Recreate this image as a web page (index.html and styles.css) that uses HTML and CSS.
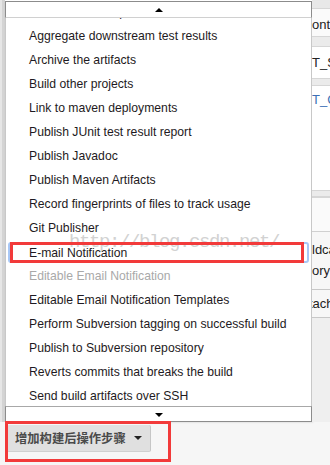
FILE: index.html
```html
<!DOCTYPE html>
<html lang="zh-CN">
<head>
  <meta charset="UTF-8">
  <title>增加构建后操作步骤</title>
  <link rel="stylesheet" href="styles.css">
</head>
<body>
  <div class="screen">
    <div class="top">
      <div class="edge"></div>
      <div class="menu">
        <div class="scroll scroll-up"><span class="tri tri-up"></span></div>
        <div class="viewport">
          <ul class="items">
            <li>Publish HTML reports</li>
            <li>Aggregate downstream test results</li>
            <li>Archive the artifacts</li>
            <li>Build other projects</li>
            <li>Link to maven deployments</li>
            <li>Publish JUnit test result report</li>
            <li>Publish Javadoc</li>
            <li>Publish Maven Artifacts</li>
            <li>Record fingerprints of files to track usage</li>
            <li>Git Publisher</li>
            <li class="focused"><span>E-mail Notification</span></li>
            <li class="disabled">Editable Email Notification</li>
            <li>Editable Email Notification Templates</li>
            <li>Perform Subversion tagging on successful build</li>
            <li>Publish to Subversion repository</li>
            <li>Reverts commits that breaks the build</li>
            <li>Send build artifacts over SSH</li>
          </ul>
        </div>
        <div class="scroll scroll-down"><span class="tri tri-down"></span></div>
      </div>
      <div class="behind">
        <div class="band b-top"></div>
        <div class="row r-ont">ontrol</div>
        <div class="band"></div>
        <div class="row r-ts">T_SERVER</div>
        <div class="band b-small"></div>
        <div class="row r-tc"><span class="blue">T_COMMIT</span></div>
        <div class="band b-double"></div>
        <div class="row r-blank"></div>
        <div class="row r-ldca">ldcard<br>ory</div>
        <div class="row r-tach">tach</div>
        <div class="row r-rest"></div>
      </div>
    </div>
    <div class="actions">
      <button class="add-btn">增加构建后操作步骤 <span class="caret"></span></button>
    </div>

    <div class="watermark">http://blog.csdn.net/</div>
    <div class="mark mark-item"></div>
    <div class="mark mark-btn"></div>
  </div>
</body>
</html>
```

FILE: styles.css
```css
* {
  padding: 0;
  margin: 0;
  box-sizing: border-box;
}
body {
  width: 330px;
  height: 465px;
  overflow: hidden;
  background-color: #f6f6f6;
  font-family: "Liberation Sans", Arial, "Noto Sans CJK SC", sans-serif;
}
.screen {
  position: relative;
  width: 330px;
  height: 465px;
}
.top {
  display: grid;
  grid-template-columns: 5px 307px 1fr;
  height: 422px;
}
.edge {
  background: linear-gradient(to right, #e6e6e6 0, #e6e6e6 2px, #d4d4d4 2px, #d4d4d4 5px);
}

/* dropdown menu */
.menu {
  display: flex;
  flex-direction: column;
  background-color: #fff;
  box-shadow: 1px 0 2px rgba(0, 0, 0, .18);
}
.scroll {
  position: relative;
  background-color: #fff;
  border: 1px solid #8c8c8c;
}
.scroll-up {
  margin-top: 1px;
  height: 17px;
  border-bottom-color: #d0d0d0;
}
.scroll-down {
  height: 16px;
  border-top-color: #a8a8a8;
}
.tri {
  position: absolute;
  left: 149px;
  width: 0;
  height: 0;
  border-left: 4px solid transparent;
  border-right: 4px solid transparent;
}
.tri-up {
  top: 6px;
  border-bottom: 4px solid #000;
}
.tri-down {
  top: 6px;
  border-top: 4px solid #000;
}
.viewport {
  height: 388px;
  overflow: hidden;
  border-left: 1px solid #c8c8c8;
  border-right: 1px solid #c8c8c8;
}
.items {
  list-style: none;
  margin-top: -18px;
}
.items li {
  height: 24px;
  line-height: 25px;
  padding-left: 23px;
  font-size: 12.2px;
  color: #1e1a22;
  white-space: nowrap;
}
.items li.disabled {
  color: #a9a9a9;
}
.items li.focused {
  padding: 2px 0 1px 2px;
  line-height: 20px;
}
.items li.focused span {
  display: block;
  width: 301px;
  height: 21px;
  padding-left: 19px;
  border: 2px solid #a9c8f6;
  border-radius: 3px;
  line-height: 18px;
}

/* page content behind the menu */
.behind {
  overflow: hidden;
  background-color: #efefef;
  font-size: 13px;
  color: #222;
  white-space: nowrap;
}
.band {
  height: 11px;
  background-color: #ebebeb;
  border-top: 1px solid #d6d6d6;
  border-bottom: 1px solid #d6d6d6;
}
.b-top {
  height: 9px;
  border-top: 0;
  background-color: #e8e8e8;
}
.b-small {
  height: 8px;
}
.b-double {
  height: 8px;
  border-bottom: 2px solid #d6d6d6;
}
.row {
  background-color: #fafafa;
}
.r-ont {
  height: 27px;
  line-height: 27px;
  padding-top: 2px;
}
.r-ts {
  height: 31px;
  line-height: 31px;
  background-color: #fff;
}
.r-tc {
  height: 104px;
  line-height: 28px;
  background-color: #fff;
}
.blue {
  color: #3d6fb5;
}
.r-blank {
  height: 34px;
  border-bottom: 1px solid #d0d0d0;
}
.r-ldca {
  height: 58px;
  padding-top: 7px;
  line-height: 21px;
  background-color: #f7f7f7;
  border-bottom: 1px solid #c8c8c8;
}
.r-tach {
  height: 28px;
  line-height: 28px;
  margin-left: -3px;
  background-color: #f7f7f7;
  border-bottom: 1px solid #c8c8c8;
}
.r-rest {
  height: 120px;
  background-color: #efefef;
}

/* add post-build step button */
.actions {
  padding: 3px 0 0 7px;
}
.add-btn {
  display: flex;
  align-items: center;
  width: 144px;
  height: 27px;
  padding-left: 8px;
  border: 0;
  border-right: 1px solid #c6c6c6;
  border-bottom: 1px solid #d0d0d0;
  border-radius: 2px;
  background-color: #e0e0e0;
  font-family: "Liberation Sans", "Noto Sans CJK SC", sans-serif;
  font-size: 12.3px;
  font-weight: bold;
  color: #4a4a4a;
}
.caret {
  display: inline-block;
  width: 0;
  height: 0;
  margin-left: 8px;
  border-left: 4px solid transparent;
  border-right: 4px solid transparent;
  border-top: 4px solid #222;
}

/* overlays: watermark and red annotation boxes */
.watermark {
  position: absolute;
  left: 69px;
  top: 231px;
  font-family: "Liberation Mono", monospace;
  font-size: 19px;
  letter-spacing: -1.4px;
  color: #d2d2d2;
}
.mark {
  position: absolute;
  border: 3px solid #f23a3a;
}
.mark-item {
  left: 10px;
  top: 242px;
  width: 294px;
  height: 21px;
}
.mark-btn {
  left: 5px;
  top: 421px;
  width: 166px;
  height: 41px;
}
```
